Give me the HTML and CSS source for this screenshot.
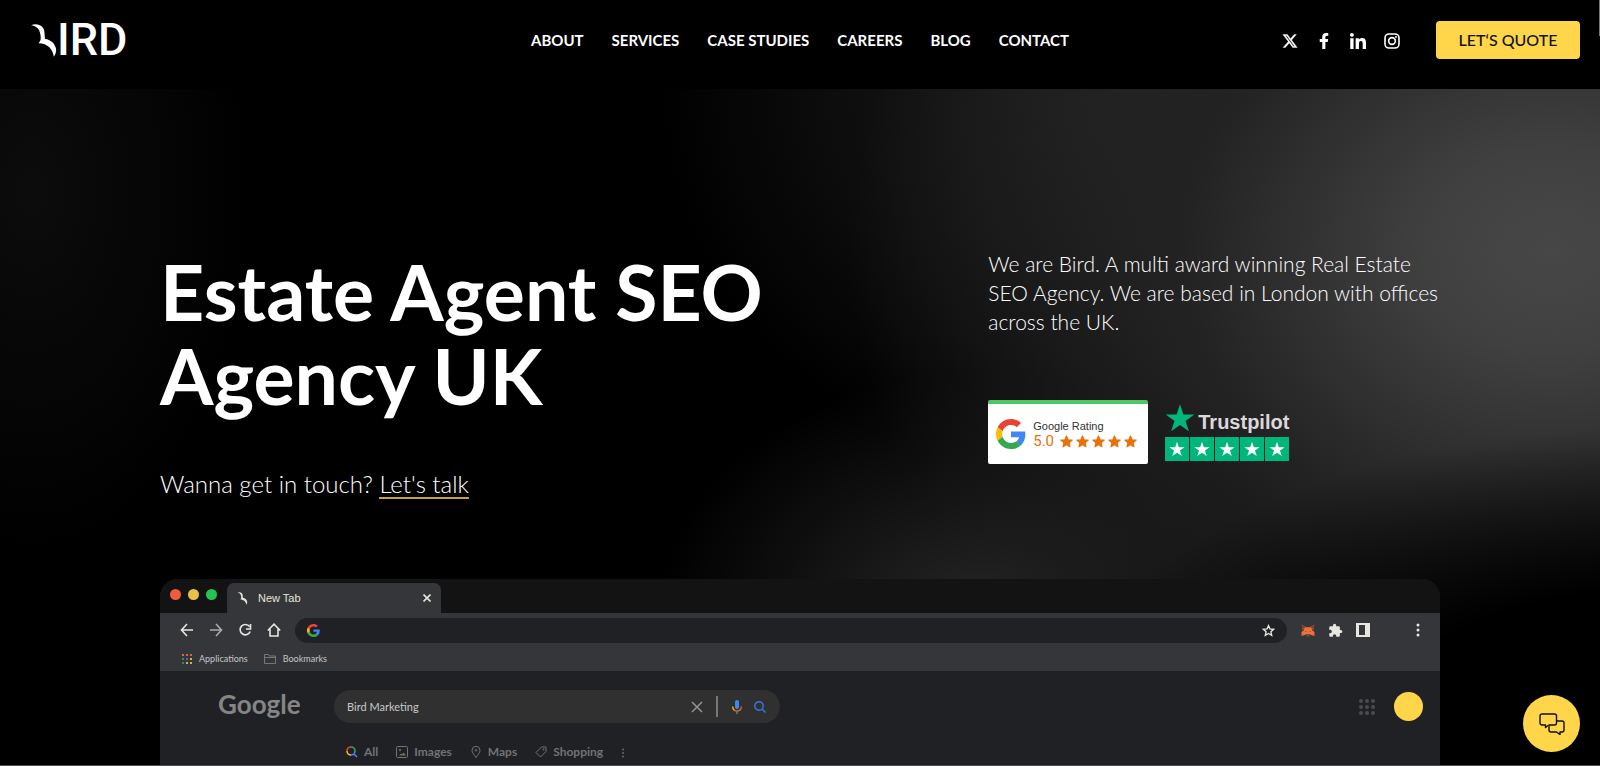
FILE: index.html
```html
<!DOCTYPE html>
<html lang="en">
<head>
    <meta charset="UTF-8">
    <meta name="viewport" content="width=device-width, initial-scale=1.0">
    <title>Estate Agent SEO Agency UK | Bird</title>
    <link rel="stylesheet" href="styles.css">
</head>
<body>
    <!-- shared icon shapes -->
    <svg class="sprite" aria-hidden="true">
        <symbol id="bird" viewBox="0 0 28 36">
            <path d="M0 1.500C7-1 14 2 14.500 9C14.600 12 15 14 15 16C21 17 26 21 27 27C27.300 30 26.500 33 24.500 35.500C24 28 18 21 8 21C11 18 11 14 9.500 9C8.500 5 5 2 0 1.500Z" fill="currentColor"/>
        </symbol>
        <symbol id="google-g" viewBox="0 0 48 48">
            <path fill="#ea4335" d="M24 9.500c3.540 0 6.710 1.220 9.210 3.600l6.850-6.850C35.900 2.380 30.470 0 24 0 14.620 0 6.510 5.380 2.560 13.220l7.980 6.190C12.430 13.720 17.740 9.500 24 9.500z"/>
            <path fill="#4285f4" d="M46.980 24.550c0-1.570-.15-3.090-.38-4.550H24v9.020h12.940c-.58 2.960-2.260 5.480-4.780 7.180l7.730 6c4.510-4.180 7.090-10.360 7.090-17.650z"/>
            <path fill="#fbbc05" d="M10.530 28.590c-.48-1.450-.76-2.990-.76-4.590s.27-3.140.76-4.590l-7.980-6.190C.92 16.460 0 20.120 0 24s.92 7.540 2.560 10.780l7.970-6.190z"/>
            <path fill="#34a853" d="M24 48c6.480 0 11.930-2.130 15.890-5.810l-7.730-6c-2.150 1.450-4.920 2.300-8.160 2.300-6.260 0-11.570-4.220-13.470-9.910l-7.980 6.190C6.510 42.620 14.620 48 24 48z"/>
        </symbol>
        <symbol id="star" viewBox="0 0 24 24">
            <path d="M12 1l2.700 8.200H23.400l-7 5.100 2.700 8.300L12 17.500l-7.100 5.100 2.700-8.300-7-5.100h8.700z" fill="currentColor"/>
        </symbol>
        <symbol id="star-round" viewBox="0 0 24 24">
            <path d="M12 2l3 6.800 7.500.7-5.600 5 1.600 7.300L12 18l-6.500 3.800 1.600-7.300-5.600-5 7.500-.7z" fill="currentColor" stroke="currentColor" stroke-width="2" stroke-linejoin="round"/>
        </symbol>
    </svg>

    <header class="header">
        <a href="#" class="logo" aria-label="Bird">
            <svg class="logo-bird"><use href="#bird"/></svg>
            <span>IRD</span>
        </a>
        <nav class="nav">
            <a href="#">ABOUT</a>
            <a href="#">SERVICES</a>
            <a href="#">CASE STUDIES</a>
            <a href="#">CAREERS</a>
            <a href="#">BLOG</a>
            <a href="#">CONTACT</a>
        </nav>
        <div class="header-right">
            <div class="social">
                <a href="#" aria-label="X">
                    <svg viewBox="0 0 24 24"><path fill="currentColor" stroke="currentColor" stroke-width=".6" d="M18.244 2.250h3.308l-7.227 8.260 8.502 11.240H16.170l-5.214-6.817L4.990 21.750H1.680l7.730-8.835L1.254 2.250H8.080l4.713 6.231zm-1.161 17.520h1.833L7.084 4.126H5.117z"/></svg>
                </a>
                <a href="#" aria-label="Facebook">
                    <svg viewBox="0 0 320 512"><path fill="currentColor" d="M279 288l14-93h-89v-60c0-25 12-50 52-50h41V7s-37-7-72-7c-73 0-121 45-121 125v70H23v93h81v224h100V288z"/></svg>
                </a>
                <a href="#" aria-label="LinkedIn">
                    <svg viewBox="0 0 448 448"><path fill="currentColor" d="M100 448H7V149h93zM54 108C24 108 0 83 0 54a54 54 0 01108 0c0 29-24 54-54 54zM448 448h-93V302c0-34-1-79-48-79-49 0-56 38-56 77v148h-93V149h89v41h1c13-24 43-48 88-48 94 0 112 62 112 142z"/></svg>
                </a>
                <a href="#" aria-label="Instagram">
                    <svg viewBox="0 0 24 24" fill="none" stroke="currentColor" stroke-width="2.400"><rect x="1.500" y="1.500" width="21" height="21" rx="6"/><circle cx="12" cy="12" r="5"/><circle cx="18" cy="6" r="1" fill="currentColor" stroke-width="1"/></svg>
                </a>
            </div>
            <a href="#" class="quote-btn">LET‘S QUOTE</a>
        </div>
    </header>

    <main class="hero">
        <div class="hero-inner">
            <div class="hero-left">
                <h1>Estate Agent SEO Agency UK</h1>
                <p class="touch">Wanna get in touch? <a href="#">Let's talk</a></p>
            </div>
            <div class="hero-right">
                <p class="intro">We are Bird. A multi award winning Real Estate SEO Agency. We are based in London with offices across the UK.</p>
                <div class="badges">
                    <div class="google-badge">
                        <svg class="badge-g"><use href="#google-g"/></svg>
                        <div>
                            <div class="rating-title">Google Rating</div>
                            <div class="rating-row">
                                <span>5.0</span>
                                <svg><use href="#star-round"/></svg>
                                <svg><use href="#star-round"/></svg>
                                <svg><use href="#star-round"/></svg>
                                <svg><use href="#star-round"/></svg>
                                <svg><use href="#star-round"/></svg>
                            </div>
                        </div>
                    </div>
                    <div class="trustpilot">
                        <div class="tp-name">
                            <svg><use href="#star"/></svg>
                            <span>Trustpilot</span>
                        </div>
                        <div class="tp-stars">
                            <svg><use href="#star"/></svg>
                            <svg><use href="#star"/></svg>
                            <svg><use href="#star"/></svg>
                            <svg><use href="#star"/></svg>
                            <svg><use href="#star"/></svg>
                        </div>
                    </div>
                </div>
            </div>
        </div>

        <div class="browser">
            <div class="tab-bar">
                <div class="dots"><i class="red"></i><i class="yellow"></i><i class="green"></i></div>
                <div class="tab">
                    <svg class="tab-bird"><use href="#bird"/></svg>
                    <span>New Tab</span>
                    <button type="button" aria-label="Close tab">
                        <svg viewBox="0 0 8 8" stroke="currentColor" stroke-width="1.600"><path d="M.5.5l7 7M7.500.5l-7 7"/></svg>
                    </button>
                </div>
            </div>
            <div class="toolbar">
                <div class="tool-left">
                    <button type="button" aria-label="Back"><svg viewBox="0 0 14 14"><path d="M13 7H2M7 1L1.500 7L7 13"/></svg></button>
                    <button type="button" aria-label="Forward" class="dim"><svg viewBox="0 0 14 14"><path d="M1 7h11M7 1l5.500 6L7 13"/></svg></button>
                    <button type="button" aria-label="Reload"><svg viewBox="0 0 14 14"><path d="M11.500 3.500A5.200 5.200 0 1 0 12.200 8.500M12.500 1v5H8"/></svg></button>
                    <button type="button" aria-label="Home"><svg viewBox="0 0 14 14"><path d="M.8 7.500L7 1.200l6.200 6.300M3 6v7h8V6"/></svg></button>
                </div>
                <div class="url">
                    <svg class="url-g"><use href="#google-g"/></svg>
                    <input type="text" aria-label="Address">
                    <svg class="url-star" viewBox="0 0 24 24"><path d="M12 3l2.700 6.200 6.800.6-5.100 4.500 1.500 6.700-5.900-3.500L6.100 21l1.500-6.700-5.100-4.500 6.800-.6z" fill="none" stroke="currentColor" stroke-width="2.500"/></svg>
                </div>
                <div class="tool-right">
                    <svg class="fox" viewBox="0 0 26 24"><path d="M1 2l9 5M25 2l-9 5" stroke="#a0492c" stroke-width="2"/><path fill="#8f4a30" d="M2 4l7 5-7 3zM24 4l-7 5 7 3z"/><path fill="#f0703a" d="M7 6h12l2 6 4 3v7l-7-2H8l-7 2v-7l4-3z"/><path fill="#5a4a44" d="M8 19h10l-3 5h-4zM8 13l3 2H8zM18 13l-3 2h3z"/></svg>
                    <svg class="puzzle" viewBox="0 0 24 24"><path fill="currentColor" d="M20.500 11H19V7a2 2 0 00-2-2h-4V3.500a2.500 2.500 0 00-5 0V5H4a2 2 0 00-2 2v3.800h1.500a2.700 2.700 0 010 5.400H2V20a2 2 0 002 2h3.800v-1.500a2.700 2.700 0 015.400 0V22H17a2 2 0 002-2v-4h1.500a2.500 2.500 0 000-5z"/></svg>
                    <svg class="panel" viewBox="0 0 14 14"><path fill="currentColor" fill-rule="evenodd" d="M0 0h14v14H0zM3 2v10h6V2z"/></svg>
                    <svg class="kebab" viewBox="0 0 4 14" fill="currentColor"><circle cx="2" cy="2" r="1.500"/><circle cx="2" cy="7" r="1.500"/><circle cx="2" cy="12" r="1.500"/></svg>
                </div>
            </div>
            <div class="bookmarks">
                <a href="#">
                    <svg class="apps" viewBox="0 0 10 10"><path fill="#e0603f" d="M0 0h2v2H0zM4 0h2v2H4zM8 0h2v2H8z"/><path fill="#3f8a5c" d="M0 4h2v2H0zM0 8h2v2H0z"/><path fill="#4a6fa8" d="M4 4h2v2H4z"/><path fill="#d9b13c" d="M8 4h2v2H8zM4 8h2v2H4zM8 8h2v2H8z"/></svg>
                    Applications
                </a>
                <a href="#">
                    <svg class="folder" viewBox="0 0 12 10"><path d="M.5 9.500v-9h4l1 1.500h6v7.500zM.5 3.500h11" fill="none" stroke="#77777a"/></svg>
                    Bookmarks
                </a>
            </div>
            <div class="results">
                <div class="search-row">
                    <div class="google-word">Google</div>
                    <div class="search">
                        <input type="text" value="Bird Marketing" aria-label="Search">
                        <button type="button" aria-label="Clear"><svg class="clear" viewBox="0 0 12 12"><path d="M1 1l10 10M11 1L1 11" stroke="#949494" stroke-width="1.500"/></svg></button>
                        <i class="divider"></i>
                        <svg class="mic" viewBox="0 0 10 14" fill="none" stroke-width="1.400"><rect x="3" y="0" width="4" height="9" rx="2" fill="#4285f4"/><path d="M.7 6.500Q.7 9 2.200 10.200" stroke="#fbbc05"/><path d="M2 10.200Q5 12 8 10.200Q9.300 9 9.300 6.500" stroke="#ea5a35"/><path d="M5 11v3" stroke="#34a853"/></svg>
                        <button type="button" aria-label="Search"><svg class="lens" viewBox="0 0 12 12"><circle cx="5" cy="5" r="4.200"/><path d="M8 8l3.500 3.500"/></svg></button>
                    </div>
                    <svg class="grid-dots" viewBox="0 0 16 16" fill="#4b4c4e"><circle cx="2" cy="2" r="2"/><circle cx="8" cy="2" r="2"/><circle cx="14" cy="2" r="2"/><circle cx="2" cy="8" r="2"/><circle cx="8" cy="8" r="2"/><circle cx="14" cy="8" r="2"/><circle cx="2" cy="14" r="2"/><circle cx="8" cy="14" r="2"/><circle cx="14" cy="14" r="2"/></svg>
                    <i class="avatar"></i>
                </div>
                <nav class="filters">
                    <a href="#" class="active">
                        <svg viewBox="0 0 12 12" fill="none" stroke-width="1.600"><path d="M1 5a4 4 0 014-4" stroke="#ea4335"/><path d="M5 1a4 4 0 014 4" stroke="#34a853"/><path d="M1 5a4 4 0 004 4" stroke="#fbbc05"/><path d="M9 5a4 4 0 01-4 4M8 8l3 3" stroke="#4285f4"/></svg>
                        All
                    </a>
                    <a href="#">
                        <svg viewBox="0 0 12 12" fill="none" stroke="currentColor"><rect x=".5" y=".5" width="11" height="11" rx="1"/><path d="M3 9.500l2-2 1 1 1.500-2L10 9.500z" fill="currentColor" stroke="none"/><circle cx="4" cy="4" r=".8"/></svg>
                        Images
                    </a>
                    <a href="#">
                        <svg viewBox="0 0 12 12" fill="none" stroke="currentColor"><path d="M6 11.500C4 8.500 2 6.500 2 4.300a4 4 0 018 0C10 6.500 8 8.500 6 11.500z"/><circle cx="6" cy="4.300" r=".8"/></svg>
                        Maps
                    </a>
                    <a href="#">
                        <svg viewBox="0 0 12 12" fill="none" stroke="currentColor"><path d="M6.500 1H11v4.500L5.500 11 1 6.500z"/><circle cx="8.500" cy="3.500" r=".6"/></svg>
                        Shopping
                    </a>
                    <svg class="more" viewBox="0 0 4 10" fill="#6c6860"><circle cx="2" cy="1.500" r="1"/><circle cx="2" cy="5" r="1"/><circle cx="2" cy="8.500" r="1"/></svg>
                </nav>
            </div>
        </div>
    </main>

    <i class="scroll-mark"></i>
    <button type="button" class="chat" aria-label="Chat with us">
        <svg viewBox="0 0 26 22" fill="none" stroke="#111" stroke-width="1.400" stroke-linejoin="round"><path d="M9 12.500l-2.500 2v-2.500H3a2 2 0 01-2-2V3a2 2 0 012-2h12.500a2 2 0 012 2v7a2 2 0 01-2 2H9.500"/><path d="M17.500 8H23a2 2 0 012 2v7a2 2 0 01-2 2h-2v2.500L17.500 19H12a2 2 0 01-2-2v-5"/></svg>
    </button>
</body>
</html>
```
FILE: styles.css
```css
* {
    box-sizing: border-box;
}

body {
    margin: 0;
    height: 100vh;
    display: flex;
    flex-direction: column;
    overflow: hidden;
    background-color: #000;
    border-bottom: 1px solid #4c4d4f;
    color: #fff;
    font-family: Lato, "Open Sans", sans-serif;
}

a {
    color: inherit;
    text-decoration: none;
}

button {
    display: flex;
    padding: 0;
    border: none;
    background: none;
    color: inherit;
    cursor: pointer;
}

input {
    flex: 1;
    min-width: 0;
    padding: 0;
    border: none;
    outline: none;
    background: none;
    color: inherit;
    font-family: inherit;
}

svg {
    display: block;
    flex-shrink: 0;
}

.sprite {
    position: absolute;
    width: 0;
    height: 0;
}

/* header */
.header {
    display: grid;
    grid-template-columns: 1fr auto 1fr;
    align-items: start;
    flex-shrink: 0;
    height: 89px;
    padding: 21px 20px 0;
    background-color: #000;
}

.logo {
    display: flex;
    align-items: center;
    height: 38px;
    padding-left: 11px;
    font-family: Roboto, sans-serif;
    font-size: 45px;
    font-weight: 500;
    line-height: 38px;
}

.logo-bird {
    width: 26px;
    height: 35px;
}

.nav {
    display: flex;
    gap: 28px;
    font-size: 15px;
    font-weight: 700;
    line-height: 38px;
}

.header-right {
    display: flex;
    justify-content: flex-end;
    align-items: center;
    gap: 36px;
}

.social {
    display: flex;
    gap: 18px;
    padding-top: 2px;
}

.social svg {
    width: 16px;
    height: 16px;
}

.quote-btn {
    width: 144px;
    border-radius: 4px;
    background-color: #ffd64a;
    color: #111;
    font-size: 16px;
    font-weight: 500;
    line-height: 38px;
    text-align: center;
}

/* hero */
.hero {
    flex: 1;
    min-height: 0;
    padding-top: 160px;
    background:
        radial-gradient(ellipse 14% 55% at 2% 15%, #0c0c0c, transparent),
        radial-gradient(ellipse 38% 46% at 104% 96%, #000 48%, transparent),
        radial-gradient(ellipse 20% 36% at 61% 78%, #262626, transparent),
        radial-gradient(ellipse 44% 84% at 97% 24%, #474747, #404040 18%, #232323 52%, transparent),
        radial-gradient(ellipse 30% 60% at 71% 0%, #222, transparent),
        #000;
}

.hero-inner {
    display: grid;
    grid-template-columns: 11fr 6fr;
    width: 80%;
    margin: 0 auto 80px;
}

h1 {
    max-width: 640px;
    margin: 0 0 53px;
    font-size: 77px;
    font-weight: 700;
    line-height: 84px;
}

.touch {
    margin: 0;
    font-size: 24px;
    font-weight: 300;
    line-height: 28px;
}

.touch a {
    display: inline-block;
    border-bottom: 2px solid #c9a23a;
    line-height: 27px;
}

.intro {
    margin: 0 0 64px;
    font-size: 21px;
    font-weight: 300;
    line-height: 29px;
}

.badges {
    display: flex;
    gap: 17px;
}

.google-badge {
    display: flex;
    align-items: center;
    gap: 7px;
    width: 160px;
    height: 64px;
    padding-left: 8px;
    border-top: 4px solid #4cc764;
    border-radius: 2px;
    background-color: #fff;
}

.badge-g {
    width: 30px;
    height: 30px;
}

.rating-title {
    color: #333;
    font-family: "Liberation Sans", Arial, sans-serif;
    font-size: 11px;
    line-height: 14px;
}

.rating-row {
    display: flex;
    align-items: center;
    gap: 3px;
    color: #e8710a;
    font-family: Roboto, sans-serif;
    font-size: 15px;
    line-height: 17px;
}

.rating-row span {
    margin-right: 3px;
}

.rating-row svg {
    width: 13px;
    height: 13px;
}

.tp-name {
    display: flex;
    align-items: flex-end;
    gap: 3px;
    height: 37px;
    padding-bottom: 4px;
    color: #00b67a;
}

.tp-name svg {
    width: 30px;
    height: 30px;
}

.tp-name span {
    color: #dcd8dc;
    font-family: "Liberation Sans", Arial, sans-serif;
    font-size: 20px;
    font-weight: 700;
    line-height: 22px;
}

.tp-stars {
    display: flex;
    gap: 1px;
}

.tp-stars svg {
    width: 24px;
    height: 24px;
    padding: 4px;
    background-color: #00b67a;
}

/* browser mockup */
.browser {
    width: 80%;
    margin: 0 auto;
    overflow: hidden;
    border-radius: 18px 18px 0 0;
    background-color: #202124;
}

.tab-bar {
    display: flex;
    align-items: flex-end;
    height: 34px;
    padding-left: 10px;
    background-color: #131313;
}

.dots {
    display: flex;
    gap: 7px;
    align-self: center;
    margin-right: 10px;
    padding-bottom: 3px;
}

.dots i {
    width: 11px;
    height: 11px;
    border-radius: 50%;
}

.red {
    background-color: #ee5c3e;
}

.yellow {
    background-color: #e8c246;
}

.green {
    background-color: #27c254;
}

.tab {
    display: flex;
    align-items: center;
    gap: 10px;
    width: 214px;
    height: 30px;
    padding: 0 10px;
    border-radius: 7px 7px 0 0;
    background-color: #35363a;
    color: #e8e4d8;
    font-family: "Liberation Sans", Arial, sans-serif;
    font-size: 11px;
}

.tab-bird {
    width: 11px;
    height: 13px;
}

.tab button {
    margin-left: auto;
}

.tab button svg {
    width: 8px;
    height: 8px;
}

.toolbar {
    display: flex;
    align-items: center;
    gap: 14px;
    height: 34px;
    padding: 0 20px;
    background-color: #35363a;
    color: #e8e6e0;
}

.tool-left {
    display: flex;
    gap: 15px;
}

.tool-left svg {
    width: 14px;
    height: 14px;
    fill: none;
    stroke: currentColor;
    stroke-width: 1.600;
}

.tool-left .dim {
    color: #a9aaab;
}

.url {
    display: flex;
    flex: 1;
    align-items: center;
    gap: 10px;
    height: 25px;
    padding: 0 12px;
    border-radius: 13px;
    background-color: #202124;
    font-size: 12px;
}

.url-g {
    width: 13px;
    height: 13px;
}

.url-star {
    width: 13px;
    height: 13px;
}

.tool-right {
    display: flex;
    align-items: center;
    gap: 13px;
}

.fox {
    width: 14px;
    height: 13px;
}

.puzzle {
    width: 15px;
    height: 15px;
}

.panel {
    width: 14px;
    height: 14px;
    margin-right: 33px;
}

.kebab {
    width: 4px;
    height: 14px;
}

.bookmarks {
    display: flex;
    gap: 16px;
    height: 24px;
    padding-left: 22px;
    background-color: #35363a;
    color: #c6c6c6;
    font-size: 9px;
    line-height: 24px;
}

.bookmarks a {
    display: flex;
    align-items: center;
    gap: 7px;
}

.apps {
    width: 10px;
    height: 10px;
}

.folder {
    width: 12px;
    height: 10px;
}

.results {
    padding: 19px 17px 0 58px;
}

.search-row {
    display: flex;
    align-items: center;
}

.google-word {
    width: 116px;
    padding-bottom: 4px;
    color: #858585;
    font-size: 26px;
    font-weight: 700;
    line-height: 29px;
}

.search {
    display: flex;
    align-items: center;
    width: 37%;
    height: 33px;
    margin-right: auto;
    padding: 0 14px 0 13px;
    border-radius: 17px;
    background-color: #303031;
    color: #c9c9c9;
}

.search input {
    font-size: 11px;
}

.clear {
    width: 12px;
    height: 12px;
}

.divider {
    width: 2px;
    height: 21px;
    margin: 0 14px 0 13px;
    background-color: #777;
}

.mic {
    width: 10px;
    height: 14px;
    margin-right: 12px;
}

.lens {
    width: 12px;
    height: 12px;
    fill: none;
    stroke: #3b78dc;
    stroke-width: 1.400;
}

.grid-dots {
    width: 16px;
    height: 16px;
    margin-right: 19px;
}

.avatar {
    width: 29px;
    height: 29px;
    border-radius: 50%;
    background-color: #ffd64a;
}

.filters {
    display: flex;
    align-items: center;
    gap: 18px;
    padding: 16px 0 0 128px;
    color: #727375;
    font-size: 12px;
    font-weight: 700;
    line-height: 26px;
}

.filters a {
    display: flex;
    align-items: center;
    gap: 6px;
    border-bottom: 2px solid transparent;
}

.filters a svg {
    width: 12px;
    height: 12px;
}

.filters .active {
    border-color: #8f7c3d;
}

.filters .more {
    width: 4px;
    height: 10px;
}

/* floating items */
.scroll-mark {
    position: fixed;
    top: 0;
    right: 0;
    width: 1px;
    height: 36px;
    background-color: #777;
}

.chat {
    position: fixed;
    right: 20px;
    bottom: 14px;
    align-items: center;
    justify-content: center;
    width: 57px;
    height: 57px;
    border-radius: 50%;
    background-color: #ffd64a;
}

.chat svg {
    width: 26px;
    height: 22px;
}
```
